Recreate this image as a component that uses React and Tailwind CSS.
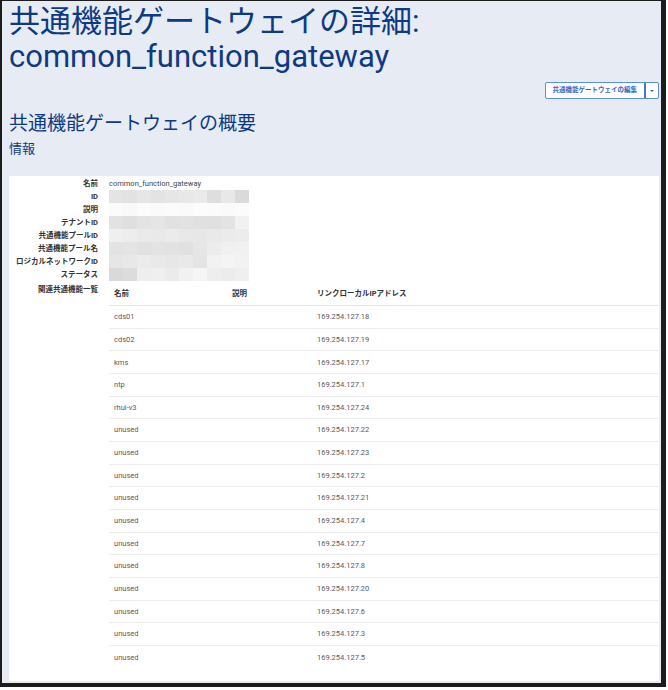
import React from 'react'

const labels = [
  '名前',
  'ID',
  '説明',
  'テナントID',
  '共通機能プールID',
  '共通機能プール名',
  'ロジカルネットワークID',
  'ステータス',
]

// redacted values drawn as a pixel mosaic
const mosaic = [
  ['#e4e4e4', '#e2e2e2', '#e6e6e6', '#e3e3e3', '#e6e6e6', '#e8e8e8', '#eaeaea', '#dedede', '#e8e8e8', '#dadada'],
  ['#fbfbfb', '#f9f9f9', '#fcfcfc', '#fafafa', '#fbfbfb', '#fafafa', '#fcfcfc', '#fbfbfb', '#fafafa', '#fbfbfb'],
  ['#e2e2e2', '#dfdfdf', '#e3e3e3', '#e5e5e5', '#e1e1e1', '#e2e2e2', '#e0e0e0', '#e0e0e0', '#e3e3e3', '#f1f1f1'],
  ['#efefef', '#ededed', '#eaeaea', '#e9e9e9', '#ebebeb', '#e8e8e8', '#e7e7e7', '#e9e9e9', '#ebebeb', '#ececec'],
  ['#e3e3e3', '#e4e4e4', '#e1e1e1', '#e3e3e3', '#e2e2e2', '#e0e0e0', '#e6e6e6', '#ececec', '#f0f0f0', '#f1f1f1'],
  ['#e6e6e6', '#e8e8e8', '#ebebeb', '#e9e9e9', '#e7e7e7', '#e9e9e9', '#e4e4e4', '#f2f2f2', '#f4f4f4', '#f2f2f2'],
  ['#d9d9d9', '#dcdcdc', '#eeeeee', '#efefef', '#ebebeb', '#f1f1f1', '#f5f5f5', '#eeeeee', '#ececec', '#efefef'],
]

const rows = [
  ['cds01', '169.254.127.18'],
  ['cds02', '169.254.127.19'],
  ['kms', '169.254.127.17'],
  ['ntp', '169.254.127.1'],
  ['rhui-v3', '169.254.127.24'],
  ['unused', '169.254.127.22'],
  ['unused', '169.254.127.23'],
  ['unused', '169.254.127.2'],
  ['unused', '169.254.127.21'],
  ['unused', '169.254.127.4'],
  ['unused', '169.254.127.7'],
  ['unused', '169.254.127.8'],
  ['unused', '169.254.127.20'],
  ['unused', '169.254.127.6'],
  ['unused', '169.254.127.3'],
  ['unused', '169.254.127.5'],
]

const App = () => {
  return (
    <div
      className="w-[668px] h-[690px] bg-white"
      style={{ fontFamily: 'Roboto, "Noto Sans CJK JP", sans-serif' }}
    >
      <div className="w-[666px] h-[687px] border-l-2 border-t border-r-[5px] border-b-4 border-[#1c1c1c] bg-[#e7ebf4] flex flex-col pl-[7px] pr-[2px] pb-[2px]">
        <h1 className="text-[31px] leading-[35px] text-[#0e3a82] pt-[3px]">
          共通機能ゲートウェイの詳細:
          <br />
          common_function_gateway
        </h1>

        {/* edit button group */}
        <div className="flex justify-end mt-[8px]">
          <div className="flex h-[17px] rounded-[2px] border border-[#5b8de6] bg-white">
            <button className="px-[7px] text-[6.5px] font-bold text-[#3466c6] leading-none">
              共通機能ゲートウェイの編集
            </button>
            <button className="w-[14px] border-l-2 border-[#3f76dd] flex items-center justify-center">
              <span className="block w-0 h-0 border-l-[2.5px] border-r-[2.5px] border-t-[2.5px] border-l-transparent border-r-transparent border-t-[#2e62c4]" />
            </button>
          </div>
        </div>

        <h2 className="text-[19px] leading-[24px] text-[#0e3a82] mt-[13px]">
          共通機能ゲートウェイの概要
        </h2>
        <div className="text-[13px] leading-[18px] text-[#0e3a82] mt-[4px]">情報</div>

        <div className="flex-1 bg-white mt-[18px] pt-px">
          {labels.map((label, i) => (
            <div key={label} className="flex h-[13px] items-center text-[7.5px]">
              <div className="w-[89px] text-right font-bold text-[#333]">{label}</div>
              <div className="pl-[11px] flex">
                {i === 0 ? (
                  <span className="text-[#444]">common_function_gateway</span>
                ) : (
                  mosaic[i - 1].map((c, j) => (
                    <span
                      key={j}
                      className="block w-[14px] h-[13px]"
                      style={{ backgroundColor: c }}
                    />
                  ))
                )}
              </div>
            </div>
          ))}

          <div className="flex">
            <div className="w-[89px] text-right font-bold text-[#333] text-[7.5px] pt-[3px]">
              関連共通機能一覧
            </div>
            <div className="ml-[11px] flex-1 text-[7.5px]">
              <div className="flex h-[25px] items-center pt-px font-bold text-[#333] border-b border-[#e4e4e4]">
                <div className="w-[118px] pl-[5px]">名前</div>
                <div className="w-[85px] pl-[5px]">説明</div>
                <div className="flex-1 pl-[5px]">リンクローカルIPアドレス</div>
              </div>
              {rows.map(([name, ip], i) => (
                <div
                  key={i}
                  className={`flex h-[22.67px] items-center text-[#5a5a5a] ${
                    i < rows.length - 1 ? 'border-b border-[#ececec]' : ''
                  }`}
                >
                  <div className="w-[118px] pl-[5px]">{name}</div>
                  <div className="w-[85px] pl-[5px]"></div>
                  <div className="flex-1 pl-[5px]">{ip}</div>
                </div>
              ))}
            </div>
          </div>
        </div>
      </div>
    </div>
  )
}

export default App
